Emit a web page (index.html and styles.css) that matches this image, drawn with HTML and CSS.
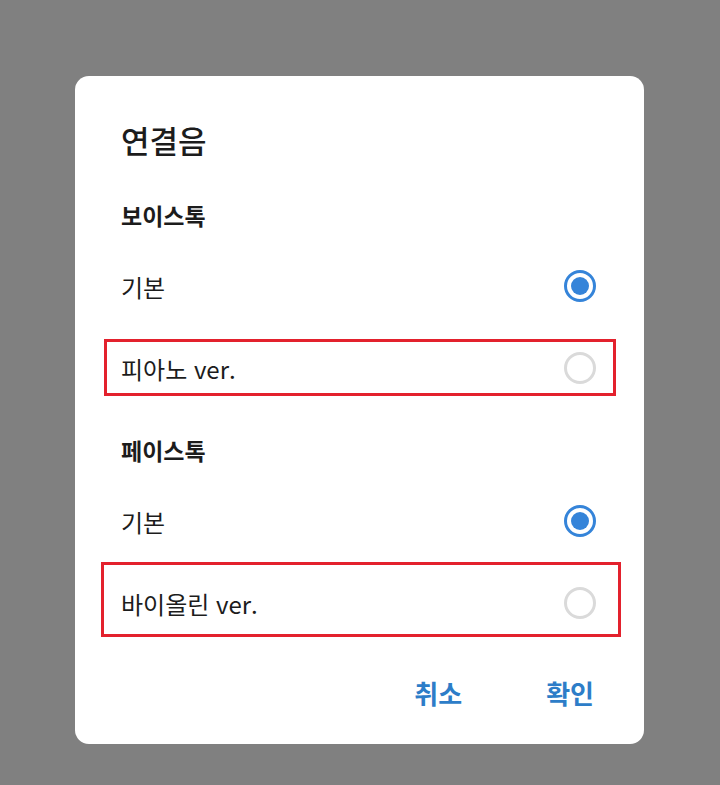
FILE: index.html
```html
<!DOCTYPE html>
<html lang="ko">
<head>
  <meta charset="UTF-8" />
  <title>연결음</title>
  <link rel="stylesheet" href="styles.css">
</head>
<body>
  <div class="dialog">
    <div class="dialog-title">연결음</div>

    <div class="section">보이스톡</div>
    <div class="option">
      <span>기본</span>
      <span class="radio checked"></span>
    </div>
    <div class="option">
      <span>피아노 ver.</span>
      <span class="radio"></span>
    </div>

    <div class="section second">페이스톡</div>
    <div class="option">
      <span>기본</span>
      <span class="radio checked"></span>
    </div>
    <div class="option">
      <span>바이올린 ver.</span>
      <span class="radio"></span>
    </div>

    <div class="actions">
      <button>취소</button>
      <button>확인</button>
    </div>

    <!-- 표시용 빨간 박스 -->
    <div class="mark mark-one"></div>
    <div class="mark mark-two"></div>
  </div>
</body>
</html>
```

FILE: styles.css
```css
body {
  margin: 0;
  padding: 76px 0 0 0;
  background: #808080;
  font-family: "Noto Sans CJK KR", "Noto Sans", sans-serif;
  color: #1c1c1c;
  height: 785px;
  box-sizing: border-box;
  overflow: hidden;
}

.dialog {
  position: relative;
  width: 569px;
  margin-left: 75px;
  box-sizing: border-box;
  padding: 44px 48px 28px 46px;
  background: #fff;
  border-radius: 14px;
}

.dialog-title {
  height: 40px;
  line-height: 40px;
  font-size: 31px;
  font-weight: 500;
}

.section {
  margin-top: 40px;
  height: 30px;
  line-height: 30px;
  font-size: 23px;
  font-weight: 700;
  margin-bottom: 15px;
}

.section.second {
  margin-top: 26px;
}

.option {
  display: flex;
  align-items: center;
  justify-content: space-between;
  height: 82px;
  font-size: 24px;
}

.radio {
  width: 32px;
  height: 32px;
  box-sizing: border-box;
  border-radius: 50%;
  border: 3px solid #dadada;
  position: relative;
}

.radio.checked {
  border-color: #3584d9;
}

.radio.checked::after {
  content: "";
  position: absolute;
  top: 4px;
  left: 4px;
  width: 18px;
  height: 18px;
  border-radius: 50%;
  background: #3584d9;
}

.actions {
  display: flex;
  justify-content: flex-end;
  gap: 36px;
  margin-top: 24px;
  margin-right: -22px;
}

.actions button {
  height: 48px;
  padding: 0 24px;
  border: none;
  background: none;
  font-family: inherit;
  font-size: 26px;
  font-weight: 700;
  color: #2d7dc8;
}

.mark {
  position: absolute;
  border: 3px solid #e3212d;
  box-sizing: border-box;
  pointer-events: none;
}

.mark-one {
  left: 29px;
  top: 263px;
  width: 512px;
  height: 57px;
}

.mark-two {
  left: 26px;
  top: 486px;
  width: 520px;
  height: 75px;
}
```
